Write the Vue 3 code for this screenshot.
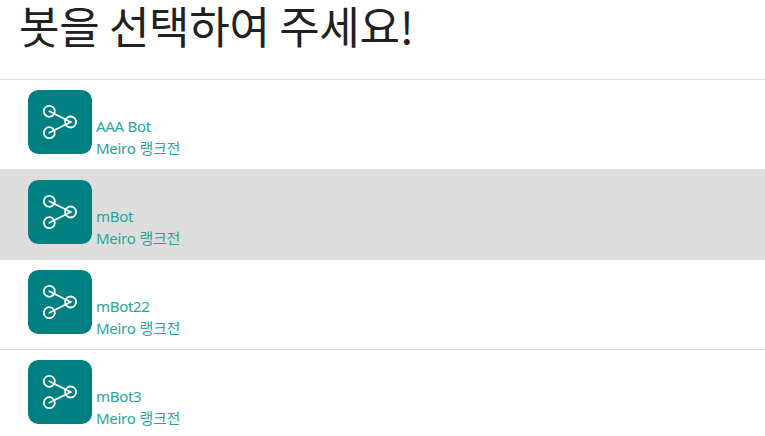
<script setup>
const bots = [
  { name: 'AAA Bot' },
  { name: 'mBot', active: true },
  { name: 'mBot22' },
  { name: 'mBot3' },
]
</script>

<template>
  <main class="page">
    <h1 class="title">봇을 선택하여 주세요!</h1>
    <ul class="bots">
      <li v-for="bot in bots" :key="bot.name" class="bot" :class="{ active: bot.active }">
        <svg class="icon" viewBox="0 0 64 64" width="64" height="64">
          <path
            d="M10 0H54Q63 1 64 10V54Q63 63 54 64H10Q1 63 0 54V10Q1 1 10 0Z"
            fill="#008080"
          />
          <g fill="none" stroke="#fff" stroke-width="1.8">
            <circle cx="21.3" cy="21.3" r="5.5" />
            <circle cx="42.6" cy="32" r="5.5" />
            <circle cx="21.3" cy="42.7" r="5.5" />
            <path d="M21.3 21.3L42.6 32L21.3 42.7" stroke-linecap="round" />
          </g>
        </svg>
        <div class="info">
          <div class="name">{{ bot.name }}</div>
          <div class="league"><span class="game">Meiro</span><span class="rank">랭크전</span></div>
        </div>
      </li>
    </ul>
  </main>
</template>

<style>
body {
  background: #fff;
  overflow: hidden;
}
</style>

<style scoped>
.title {
  margin: 0;
  height: 79px;
  padding-left: 19px;
  box-sizing: border-box;
  font: 400 44px/50px "Noto Sans CJK KR", sans-serif;
  letter-spacing: -0.3px;
  color: #212121;
  white-space: nowrap;
}
.bots {
  margin: 0;
  padding: 0;
  list-style: none;
}
.bot {
  display: flex;
  gap: 4px;
  height: 90px;
  box-sizing: border-box;
  padding: 10px 28px 0;
  border-top: 1px solid #ddd;
}
.bot.active {
  background: #ddd;
}
.icon {
  flex: none;
  display: block;
}
.info {
  padding-top: 25px;
  font: 400 15px/22px "Noto Sans", "Noto Sans CJK KR", sans-serif;
  letter-spacing: -0.3px;
  color: #26a69a;
  white-space: nowrap;
}
.name,
.league {
  height: 22px;
}
.league {
  display: flex;
  gap: 4px;
}
.rank {
  font-family: "Noto Sans CJK KR", sans-serif;
}
</style>
